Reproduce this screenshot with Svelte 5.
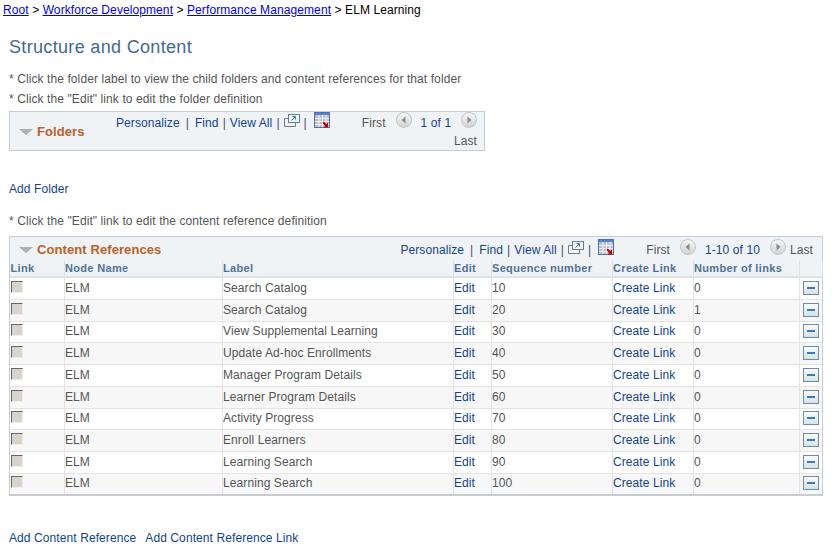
<script>
const rows = [
  ['Search Catalog', '10', '0'],
  ['Search Catalog', '20', '1'],
  ['View Supplemental Learning', '30', '0'],
  ['Update Ad-hoc Enrollments', '40', '0'],
  ['Manager Program Details', '50', '0'],
  ['Learner Program Details', '60', '0'],
  ['Activity Progress', '70', '0'],
  ['Enroll Learners', '80', '0'],
  ['Learning Search', '90', '0'],
  ['Learning Search', '100', '0']
];
</script>

{#snippet zoomIcon()}
  <svg class="zoom-icon" width="16" height="14" viewBox="0 0 16 14">
    <rect x="4.500" y="0.500" width="11" height="8" fill="#f0f3f5" stroke="#5f7f95" />
    <path d="M4.500 4.500H0.500V12.500H11.500V8.500" fill="none" stroke="#6f7f8a" />
    <path d="M7.500 6.500L11.500 2.500M8.500 2.500H11.500V5.500" fill="none" stroke="#4f6f85" />
  </svg>
{/snippet}

{#snippet gridIcon()}
  <svg class="grid-icon" width="16" height="16" viewBox="0 0 16 16">
    <rect x="0.500" y="0.500" width="15" height="15" fill="#b9c0cc" stroke="#4a72b8" />
    <rect x="1" y="1" width="14" height="2" fill="#5b82c4" />
    <path d="M5 3V15M8.500 3V15M12 3V15M1 6.500H15M1 9.500H15M1 12.500H15" stroke="#f2f2f2" />
    <path d="M9.500 9.500L12.500 12L14 10.500V15.500H9.500L11 14L8.500 11Z" fill="#c00000" />
  </svg>
{/snippet}

{#snippet navBtn(dir)}
  <svg class="nav" width="16" height="16" viewBox="0 0 16 16">
    <defs>
      <linearGradient id="navfill" x1="0" y1="0" x2="0" y2="1">
        <stop offset="0" stop-color="#f7f7f7" />
        <stop offset="1" stop-color="#d2d2d2" />
      </linearGradient>
    </defs>
    <circle cx="8" cy="8" r="7.500" fill="url(#navfill)" stroke="#c4c4c4" />
    {#if dir === 'left'}
      <path d="M9.500 4.500V11.500L5.500 8Z" fill="#8a8a8a" />
    {:else}
      <path d="M6.500 4.500V11.500L10.500 8Z" fill="#8a8a8a" />
    {/if}
  </svg>
{/snippet}

<div class="page">
  <div class="crumbs">
    <a href="#root">Root</a> &gt; <a href="#wd">Workforce Development</a> &gt;
    <a href="#pm">Performance Management</a> &gt; <span>ELM Learning</span>
  </div>

  <h1>Structure and Content</h1>

  <p class="note note-folder">* Click the folder label to view the child folders and content references for that folder</p>
  <p class="note note-edit">* Click the "Edit" link to edit the folder definition</p>

  <div class="folders">
    <div class="grid-title">
      <span class="arrow"></span>
      <span>Folders</span>
    </div>
    <div class="folder-tools">
      <div class="tools">
        <span class="lnk">Personalize</span><span class="bar">|</span><span class="lnk">Find</span><span class="bar tight">|</span><span class="lnk">View All</span><span class="bar tight">|</span>{@render zoomIcon()}<span class="bar tight">|</span>{@render gridIcon()}
        <span class="first-label">First</span>
        {@render navBtn('left')}
        <span class="lnk count">1 of 1</span>
        {@render navBtn('right')}
      </div>
      <div class="last-line">Last</div>
    </div>
  </div>

  <a class="action add-folder" href="#add">Add Folder</a>

  <p class="note note-ref">* Click the "Edit" link to edit the content reference definition</p>

  <div class="content-grid">
    <div class="content-head">
      <div class="grid-title">
        <span class="arrow"></span>
        <span>Content References</span>
      </div>
      <div class="tools">
        <span class="lnk">Personalize</span><span class="bar">|</span><span class="lnk">Find</span><span class="bar tight">|</span><span class="lnk">View All</span><span class="bar tight">|</span>{@render zoomIcon()}<span class="bar tight">|</span>{@render gridIcon()}
        <span class="first-label">First</span>
        {@render navBtn('left')}
        <span class="lnk count">1-10 of 10</span>
        {@render navBtn('right')}
        <span class="last">Last</span>
      </div>
    </div>

    <table>
      <thead>
        <tr>
          <th class="c-link">Link</th>
          <th class="c-node">Node Name</th>
          <th class="c-label">Label</th>
          <th class="c-edit">Edit</th>
          <th class="c-seq">Sequence number</th>
          <th class="c-create">Create Link</th>
          <th class="c-num">Number of links</th>
          <th class="c-btn"></th>
        </tr>
      </thead>
      <tbody>
        {#each rows as row}
          <tr>
            <td><span class="check"></span></td>
            <td>ELM</td>
            <td>{row[0]}</td>
            <td class="lnk">Edit</td>
            <td>{row[1]}</td>
            <td class="lnk">Create Link</td>
            <td>{row[2]}</td>
            <td class="btn-cell"><span class="minus"></span></td>
          </tr>
        {/each}
      </tbody>
    </table>
  </div>

  <div class="bottom">
    <a class="action" href="#ref">Add Content Reference</a>
    <a class="action" href="#reflink">Add Content Reference Link</a>
  </div>
</div>

<style>
  :global(body) {
    margin: 0;
    background: #fff;
  }

  .page {
    width: 833px;
    height: 549px;
    overflow: hidden;
    font-family: "Liberation Sans", Arial, sans-serif;
    font-size: 12px;
    letter-spacing: 0.09px;
    color: #555;
  }

  .crumbs {
    padding: 3px 0 0 3px;
    height: 15px;
    line-height: 15px;
    color: #000;
  }

  .crumbs a {
    color: #00e;
  }

  h1 {
    margin: 19px 0 0 9px;
    font-size: 18px;
    letter-spacing: 0.33px;
    line-height: 20px;
    font-weight: normal;
    color: #426a96;
  }

  .note {
    margin: 0 0 0 9px;
    line-height: 14px;
  }

  .note-folder {
    margin-top: 15px;
  }

  .note-edit {
    margin-top: 6px;
  }

  .note-ref {
    margin-top: 17px;
  }

  .folders {
    margin: 5px 0 0 9px;
    width: 474px;
    height: 38px;
    display: flex;
    background: #f0f3f5;
    border: 1px solid #c6ccd1;
  }

  .folders .grid-title {
    flex: none;
    width: 106px;
    padding: 12px 0 0 9px;
    box-sizing: border-box;
  }

  .grid-title {
    display: flex;
    align-items: flex-start;
    gap: 4px;
    font-size: 13px;
    line-height: 15px;
    font-weight: bold;
    color: #b8612a;
  }

  .arrow {
    width: 0;
    height: 0;
    margin-top: 5px;
    border-left: 7px solid transparent;
    border-right: 7px solid transparent;
    border-top: 6px solid #aeb1b3;
  }

  .folder-tools {
    flex: 1;
    min-width: 0;
  }

  .tools {
    display: flex;
    align-items: flex-start;
    line-height: 15px;
    white-space: nowrap;
  }

  .folder-tools .tools {
    padding-top: 4px;
  }

  .lnk {
    color: #14438c;
  }

  .bar {
    margin: 0 6px;
    color: #4b4a7a;
  }

  .bar.tight {
    margin: 0 4px;
  }

  .zoom-icon {
    flex: none;
    margin: -2px 0 0 0;
  }

  .grid-icon {
    flex: none;
    margin: -4px 0 0 3px;
  }

  .first-label {
    margin-left: 32px;
  }

  .nav {
    flex: none;
    margin: -4px 9px 0 10px;
  }

  .last {
    margin-left: -5px;
  }

  .last-line {
    text-align: right;
    padding-right: 7px;
    line-height: 15px;
    margin-top: 3px;
  }

  .action {
    color: #14438c;
    text-decoration: none;
  }

  .add-folder {
    display: block;
    margin: 31px 0 0 9px;
    line-height: 15px;
  }

  .content-grid {
    margin: 8px 0 0 9px;
    width: 812px;
    border: 1px solid #c6ccd1;
    border-bottom-width: 2px;
    background: #f0f3f5;
  }

  .content-head {
    display: flex;
    justify-content: space-between;
    height: 24px;
    padding: 5px 9px 0 9px;
    box-sizing: border-box;
  }

  .content-head .tools {
    margin-top: 1px;
  }

  table {
    border-collapse: collapse;
    table-layout: fixed;
    width: 812px;
  }

  .c-link { width: 54px; }
  .c-node { width: 158px; }
  .c-label { width: 231px; }
  .c-edit { width: 38px; }
  .c-seq { width: 121px; }
  .c-create { width: 81px; }
  .c-num { width: 106px; }
  .c-btn { width: 23px; }

  th {
    height: 16px;
    padding: 0 0 0 0.5px;
    box-sizing: border-box;
    font-size: 11px;
    letter-spacing: 0.33px;
    line-height: 15px;
    font-weight: bold;
    text-align: left;
    color: #4e7299;
    background: #f0f3f5;
    border-right: 1px solid #dfe3e6;
    border-bottom: 2px solid #dfe3e6;
  }

  td {
    height: 22px;
    padding: 0 0 0 0.5px;
    box-sizing: border-box;
    line-height: 15px;
    background: #f7f7f7;
    border-right: 1px solid #e4e4e4;
    border-bottom: 1px solid #e4e4e4;
  }

  /* the source rows are 21.7px, so every third or fourth one comes out a pixel shorter */
  tbody tr:nth-child(4n + 3) td,
  tbody tr:last-child td {
    height: 21px;
  }

  tbody tr:nth-child(odd) td {
    background: #fff;
  }

  tbody tr:last-child td {
    border-bottom: none;
  }

  .check {
    display: block;
    width: 12px;
    height: 12px;
    margin-top: -3px;
    background: #d8d4cc;
    border-top: 1px solid #666;
    border-left: 1px solid #666;
    border-right: 1px solid #eee;
    border-bottom: 1px solid #eee;
    box-sizing: border-box;
  }

  td.btn-cell {
    padding: 0;
    border-right: none;
  }

  .minus {
    display: block;
    position: relative;
    width: 16px;
    height: 14px;
    margin: -1px 0 0 3px;
    box-sizing: border-box;
    border: 1px solid #6c8f9c;
    background: linear-gradient(#fafcfc, #d6e2e8);
  }

  .minus::after {
    content: "";
    position: absolute;
    left: 3px;
    top: 5px;
    width: 8px;
    height: 2px;
    background: #3a78c4;
  }

  .bottom {
    display: flex;
    gap: 9px;
    margin: 35px 0 0 9px;
    line-height: 15px;
  }
</style>
